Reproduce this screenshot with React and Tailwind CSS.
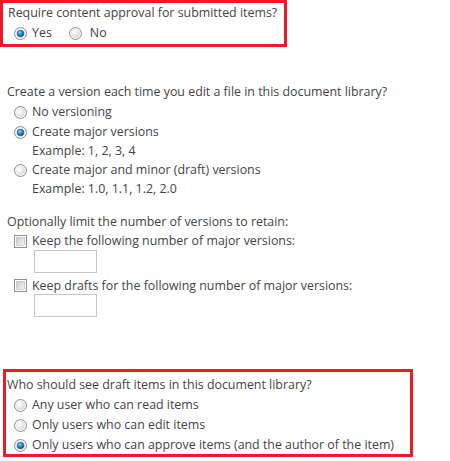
import React from "react";

function Radio({ checked }) {
  return (
    <svg width="13" height="13" viewBox="0 0 13 13" className="shrink-0">
      <defs>
        <radialGradient id="rg-off" cx="0.35" cy="0.35" r="0.8">
          <stop offset="0" stopColor="#ffffff" />
          <stop offset="1" stopColor="#d4d4d4" />
        </radialGradient>
        <radialGradient id="rg-on" cx="0.4" cy="0.35" r="0.7">
          <stop offset="0" stopColor="#7fdcff" />
          <stop offset="0.5" stopColor="#1f8ed6" />
          <stop offset="1" stopColor="#0b3f73" />
        </radialGradient>
      </defs>
      <circle cx="6.5" cy="6.5" r="6" fill="#f4f4f4" stroke="#8e8f8f" strokeWidth="1" />
      <circle cx="6.5" cy="6.5" r="4.3" fill="url(#rg-off)" />
      {checked && <circle cx="6.5" cy="6.5" r="3.3" fill="url(#rg-on)" stroke="#1b4f7e" strokeWidth="0.6" />}
    </svg>
  );
}

function Checkbox() {
  return (
    <svg width="13" height="13" viewBox="0 0 13 13" className="shrink-0">
      <defs>
        <linearGradient id="cg" x1="0" y1="0" x2="1" y2="1">
          <stop offset="0" stopColor="#cbcbcb" />
          <stop offset="1" stopColor="#f6f6f6" />
        </linearGradient>
      </defs>
      <rect x="0.5" y="0.5" width="12" height="12" fill="#ffffff" stroke="#8e8f8f" />
      <rect x="2.5" y="2.5" width="8" height="8" fill="url(#cg)" stroke="#b5b5b5" strokeWidth="0.6" />
    </svg>
  );
}

function RadioRow({ checked, children, className = "" }) {
  return (
    <div className={"flex items-center h-[20px] " + className}>
      <div className="w-[25px] flex justify-center pl-[2px]">
        <Radio checked={checked} />
      </div>
      <span>{children}</span>
    </div>
  );
}

export default function App() {
  return (
    <div
      className="w-[450px] h-[461px] bg-white text-[#444] text-[12.4px] leading-[20px] whitespace-nowrap overflow-hidden"
      style={{ fontFamily: '"Open Sans", "Noto Sans", sans-serif' }}
    >
      <div className="w-[287px] h-[47px] border-[3px] border-[#ed1c24] pl-[5px]">
        <div>Require content approval for submitted items?</div>
        <div className="flex items-center h-[20px]">
          <div className="w-[24px] flex justify-center pl-[1px]">
            <Radio checked />
          </div>
          <span>Yes</span>
          <div className="w-[35px] flex justify-end ml-[3px] pr-[8px]">
            <Radio />
          </div>
          <span>No</span>
        </div>
      </div>

      <div className="pl-[7px] pt-[35px]">
        <div>Create a version each time you edit a file in this document library?</div>
        <RadioRow>No versioning</RadioRow>
        <RadioRow checked>Create major versions</RadioRow>
        <div className="pl-[25px] leading-[18px]">Example: 1, 2, 3, 4</div>
        <RadioRow>Create major and minor (draft) versions</RadioRow>
        <div className="pl-[25px] leading-[18px]">Example: 1.0, 1.1, 1.2, 2.0</div>

        <div className="mt-[14px]">Optionally limit the number of versions to retain:</div>
        <div className="flex items-center h-[18px]">
          <div className="w-[25px] flex justify-center pl-[1px]">
            <Checkbox />
          </div>
          <span>Keep the following number of major versions:</span>
        </div>
        <div className="pl-[27px]">
          <div className="w-[63px] h-[23px] border border-[#c6c6c6] bg-white" />
        </div>
        <div className="flex items-center h-[17px] mt-[4px]">
          <div className="w-[25px] flex justify-center pl-[1px]">
            <Checkbox />
          </div>
          <span>Keep drafts for the following number of major versions:</span>
        </div>
        <div className="pl-[27px]">
          <div className="w-[63px] h-[23px] border border-[#c6c6c6] bg-white" />
        </div>
      </div>

      <div className="ml-[3px] mt-[52px] w-[410px] h-[88px] border-[3px] border-[#ed1c24] pl-[1px] pt-[3px]">
        <div>Who should see draft items in this document library?</div>
        <RadioRow>Any user who can read items</RadioRow>
        <RadioRow>Only users who can edit items</RadioRow>
        <RadioRow checked>Only users who can approve items (and the author of the item)</RadioRow>
      </div>
    </div>
  );
}
